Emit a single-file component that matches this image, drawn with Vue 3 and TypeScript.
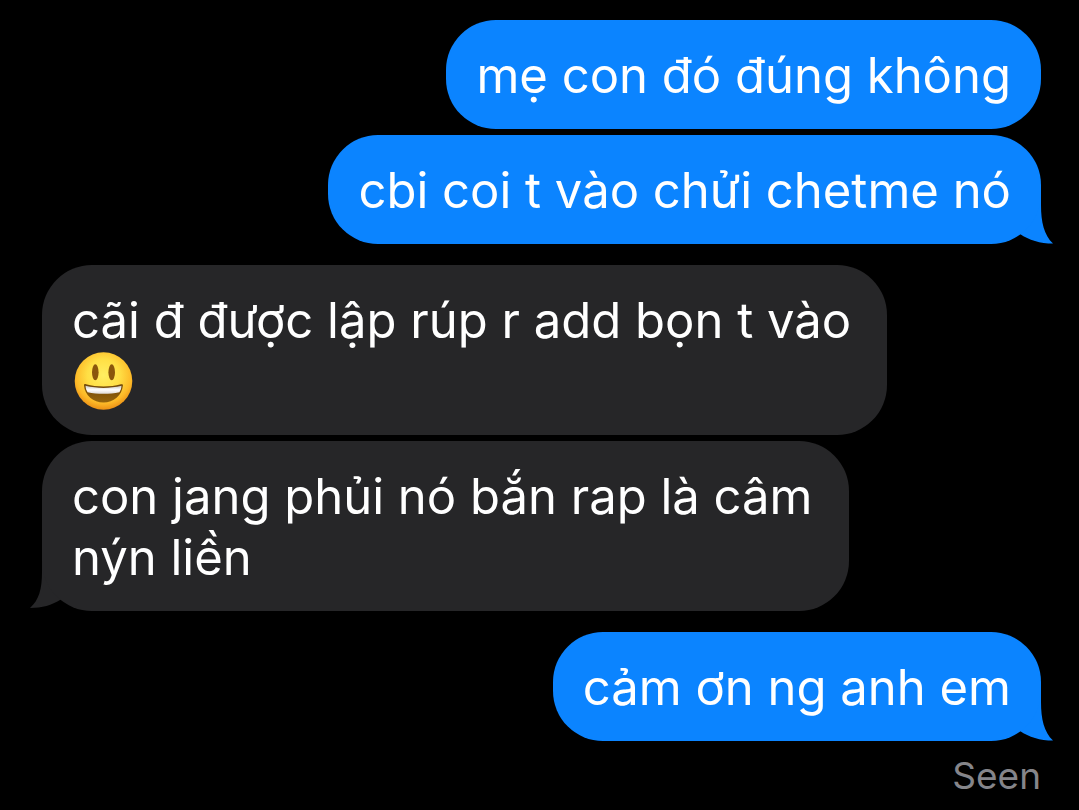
<script setup lang="ts">
interface Message {
  id: number
  side: 'sent' | 'received'
  lines: string[]
  emoji?: boolean
  tail?: boolean
}

const groups: Message[][] = [
  [
    { id: 1, side: 'sent', lines: ['mẹ con đó đúng không'] },
    { id: 2, side: 'sent', lines: ['cbi coi t vào chửi chetme nó'], tail: true },
  ],
  [
    { id: 3, side: 'received', lines: ['cãi đ được lập rúp r add bọn t vào'], emoji: true },
    { id: 4, side: 'received', lines: ['con jang phủi nó bắn rap là câm', 'nýn liền'], tail: true },
  ],
  [{ id: 5, side: 'sent', lines: ['cảm ơn ng anh em'], tail: true }],
]
</script>

<template>
  <main class="chat">
    <section v-for="(group, g) in groups" :key="g" class="group">
      <div v-for="m in group" :key="m.id" class="bubble" :class="m.side">
        <p v-for="line in m.lines" :key="line" class="line">{{ line }}</p>
        <p v-if="m.emoji" class="line emoji-line">
          <svg class="emoji" viewBox="0 0 61 61" role="img" aria-label="Grinning face with big eyes">
            <defs>
              <radialGradient id="face" cx="50%" cy="40%" r="62%">
                <stop offset="0" stop-color="#ffee62" />
                <stop offset="0.45" stop-color="#ffdf45" />
                <stop offset="0.78" stop-color="#fdba28" />
                <stop offset="1" stop-color="#e98812" />
              </radialGradient>
              <linearGradient id="teeth" x1="0" y1="0" x2="0" y2="1">
                <stop offset="0" stop-color="#c9c6c2" />
                <stop offset="0.5" stop-color="#ffffff" />
                <stop offset="1" stop-color="#dedad6" />
              </linearGradient>
              <linearGradient id="mouth" x1="0" y1="0" x2="0" y2="1">
                <stop offset="0" stop-color="#6f4608" />
                <stop offset="1" stop-color="#96650c" />
              </linearGradient>
            </defs>
            <circle cx="31.5" cy="30" r="28.8" fill="url(#face)" />
            <ellipse cx="23.3" cy="21.3" rx="3.3" ry="8" fill="#8a560c" />
            <ellipse cx="39.7" cy="21.3" rx="3.3" ry="8" fill="#8a560c" />
            <path d="M12 34.3C12 33.1 13 32.9 14 33.3C25 36.2 38 36.2 49 33.3C50.1 32.9 51 33.3 50.9 34.5C50 44.5 41.5 51.5 31.5 51.5S12.7 44.5 12 34.3Z" fill="url(#mouth)" />
            <path d="M13.5 34.8C25 37.6 38 37.6 49.5 34.8C49.3 37.6 48.5 39.6 47.4 41.2C37.5 43.4 25.5 43.4 15.6 41.2C14.5 39.6 13.7 37.6 13.5 34.8Z" fill="url(#teeth)" />
          </svg>
        </p>
        <svg v-if="m.tail && m.side === 'sent'" class="tail" viewBox="0 0 54 54" aria-hidden="true">
          <path d="M41 0V15C41 32 44 45 53 53.6C40 53.6 29 50 20 44L0 30V0Z" fill="#0b84ff" />
        </svg>
        <svg v-else-if="m.tail" class="tail" viewBox="0 0 54 54" aria-hidden="true">
          <path d="M13 0V15C13 32 10 43 1 51C13 51 23 48 31 43L54 30V0Z" fill="#262628" />
        </svg>
      </div>
    </section>
    <p class="status">Seen</p>
  </main>
</template>

<style>
body {
  margin: 0;
  background: #000;
}
</style>

<style scoped>
.chat {
  display: flex;
  flex-direction: column;
  gap: 21px;
  padding: 20px 38px 0 42px;
  font-family: Inter, "Noto Sans", sans-serif;
  color: #fff;
}
.group {
  display: flex;
  flex-direction: column;
  gap: 6px;
}
.bubble {
  position: relative;
  box-sizing: border-box;
  padding: 25px 30px 23px;
  border-radius: 50px;
}
.sent {
  align-self: flex-end;
  background: #0b84ff;
}
.received {
  align-self: flex-start;
  padding-right: 36px;
  background: #262628;
}
.line {
  margin: 0;
  font-size: 49px;
  line-height: 61px;
}
.emoji-line {
  display: flex;
}
.emoji {
  width: 61px;
  height: 61px;
}
.tail {
  position: absolute;
  z-index: -1;
  bottom: 0;
  width: 54px;
  height: 54px;
}
.sent .tail {
  right: -13px;
}
.received .tail {
  left: -13px;
}
.status {
  margin: -11px 0 0;
  align-self: flex-end;
  font-size: 37px;
  line-height: 50px;
  color: #85858a;
}
</style>
